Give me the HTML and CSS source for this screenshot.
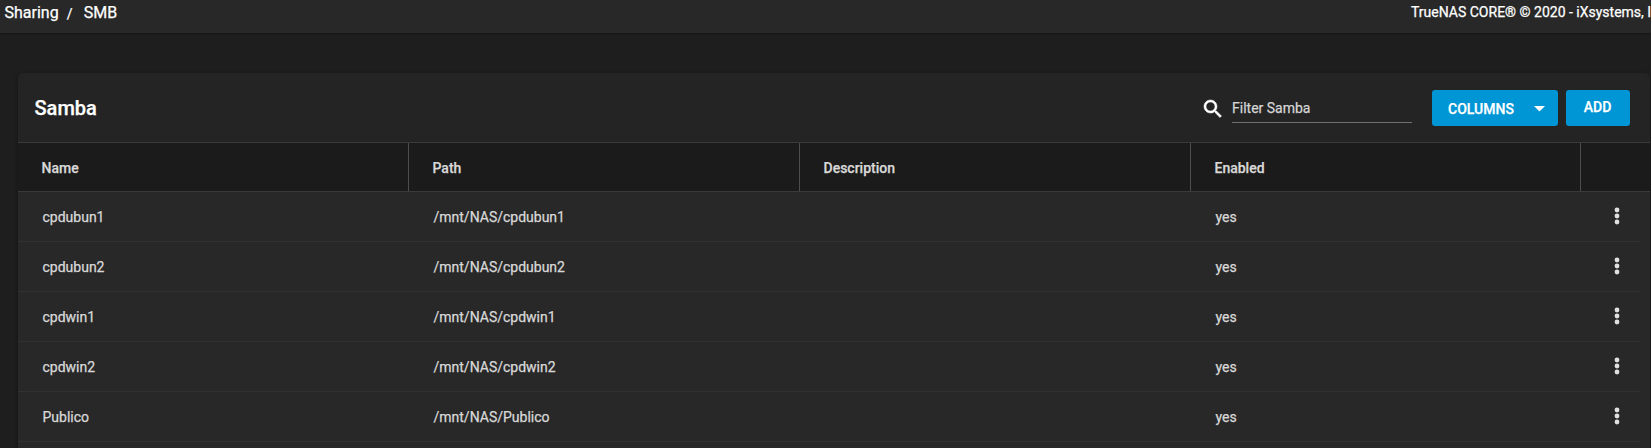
FILE: index.html
```html
<!DOCTYPE html>
<html lang="en">
<head>
<meta charset="utf-8">
<title>Sharing / SMB</title>
<link rel="stylesheet" href="styles.css">
</head>
<body>
<header class="topbar">
  <nav class="breadcrumb"><span>Sharing</span><span class="sep">/</span><span>SMB</span></nav>
  <div class="copyright">TrueNAS CORE® © 2020 - iXsystems, I</div>
</header>
<main class="card">
  <div class="toolbar">
    <h1 class="title">Samba</h1>
    <svg class="search-icon" viewBox="0 0 24 24"><path d="M15.5 14h-.79l-.28-.27C15.41 12.59 16 11.11 16 9.5 16 5.91 13.09 3 9.5 3S3 5.91 3 9.5 5.91 16 9.5 16c1.61 0 3.09-.59 4.23-1.57l.27.28v.79l5 4.99L20.49 19l-4.99-5zm-6 0C7.01 14 5 11.99 5 9.5S7.01 5 9.5 5 14 7.01 14 9.5 11.99 14 9.5 14z"/></svg>
    <div class="filter">Filter Samba</div>
    <div class="btn columns"><span>COLUMNS</span><svg class="caret" viewBox="0 0 10 5"><path d="M0 0h10L5 5z"/></svg></div>
    <div class="btn add">ADD</div>
  </div>
  <div class="grid head"><div>Name</div><div>Path</div><div>Description</div><div>Enabled</div><div></div></div>
  <div class="rows">
    <div class="grid row"><div>cpdubun1</div><div>/mnt/NAS/cpdubun1</div><div></div><div>yes</div><svg class="more" viewBox="0 0 24 24"><circle cx="12" cy="6" r="2.4"/><circle cx="12" cy="12" r="2.4"/><circle cx="12" cy="18" r="2.4"/></svg></div>
    <div class="grid row"><div>cpdubun2</div><div>/mnt/NAS/cpdubun2</div><div></div><div>yes</div><svg class="more" viewBox="0 0 24 24"><circle cx="12" cy="6" r="2.4"/><circle cx="12" cy="12" r="2.4"/><circle cx="12" cy="18" r="2.4"/></svg></div>
    <div class="grid row"><div>cpdwin1</div><div>/mnt/NAS/cpdwin1</div><div></div><div>yes</div><svg class="more" viewBox="0 0 24 24"><circle cx="12" cy="6" r="2.4"/><circle cx="12" cy="12" r="2.4"/><circle cx="12" cy="18" r="2.4"/></svg></div>
    <div class="grid row"><div>cpdwin2</div><div>/mnt/NAS/cpdwin2</div><div></div><div>yes</div><svg class="more" viewBox="0 0 24 24"><circle cx="12" cy="6" r="2.4"/><circle cx="12" cy="12" r="2.4"/><circle cx="12" cy="18" r="2.4"/></svg></div>
    <div class="grid row"><div>Publico</div><div>/mnt/NAS/Publico</div><div></div><div>yes</div><svg class="more" viewBox="0 0 24 24"><circle cx="12" cy="6" r="2.4"/><circle cx="12" cy="12" r="2.4"/><circle cx="12" cy="18" r="2.4"/></svg></div>
  </div>
</main>
</body>
</html>
```
FILE: styles.css
```css
* { box-sizing: border-box; }
body {
  margin: 0;
  height: 448px;
  overflow: hidden;
  background: #1e1e1e;
  color: #fff;
  font-family: Roboto, "Liberation Sans", sans-serif;
  font-size: 14px;
  -webkit-text-stroke: .25px currentColor;
}
.topbar {
  display: flex;
  justify-content: space-between;
  height: 33px;
  padding-left: 4.5px;
  background: #282828;
  box-shadow: 0 1px 2px rgba(0, 0, 0, .3);
  line-height: 25px;
}
.breadcrumb { display: flex; font-size: 16px; line-height: 26px; }
.sep { width: 25px; padding-left: 8px; font-size: 14px; line-height: 28px; }
.copyright { width: 240px; white-space: nowrap; }
.card {
  width: 1632px;
  height: 375px;
  margin: 40px 0 0 18px;
  background: #282828;
  border-radius: 6px 6px 0 0;
  box-shadow: 0 1px 4px rgba(0, 0, 0, .35);
  overflow: hidden;
}
.toolbar {
  display: flex;
  align-items: flex-start;
  height: 70px;
  padding: 17px 20px 0 16.5px;
  background: #242424;
  border-bottom: 1px solid #3a3a3a;
}
.title { margin: 0; font-size: 20px; font-weight: 500; line-height: 36px; }
.search-icon { width: 24px; height: 24px; margin: 7px 7px 0 auto; fill: #fff; stroke: #fff; stroke-width: .5; }
.filter {
  width: 180px;
  height: 33px;
  margin-right: 20px;
  border-bottom: 1px solid #707070;
  color: #d4d4d4;
  line-height: 36px;
}
.btn {
  height: 36px;
  border-radius: 3px;
  background: #0095d5;
  font-weight: 500;
  line-height: 34px;
}
.columns {
  display: flex;
  align-items: center;
  justify-content: space-between;
  width: 126px;
  margin-right: 8px;
  padding: 2px 13px 0 16px;
}
.caret { width: 11px; height: 5.5px; fill: #fff; }
.add { width: 64px; padding-right: 1px; text-align: center; }
.grid { display: grid; grid-template-columns: 391px 391px 391px 390px 1fr; }
.head {
  height: 49px;
  background: #1b1b1b;
  border-bottom: 1px solid #3a3a3a;
  color: #d8d8d8;
  font-weight: 500;
  line-height: 50px;
}
.head > div { height: 48px; padding-left: 23.5px; border-right: 1px solid #4d4d4d; }
.head > div:last-child { border-right: 0; }
.rows { width: 1623px; }
.row {
  height: 50px;
  border-bottom: 1px solid #313131;
  color: #d8d8d8;
  line-height: 50px;
}
.row > div { padding-left: 24.5px; }
.more { width: 24px; height: 24px; margin: 12px 0 0 24px; fill: #e0e0e0; }
```
